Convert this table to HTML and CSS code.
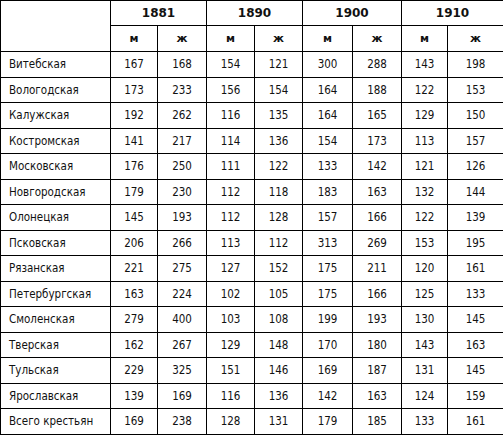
FILE: index.html
```html
<!DOCTYPE html>
<html lang="ru">
<head>
<meta charset="utf-8">
<title>Таблица</title>
<link rel="stylesheet" href="styles.css">
</head>
<body>
<table class="data">
  <colgroup>
    <col class="c-name">
    <col class="c1"><col class="c2">
    <col class="c3"><col class="c4">
    <col class="c5"><col class="c6">
    <col class="c7"><col class="c8">
  </colgroup>
  <thead>
    <tr class="h1">
      <th rowspan="2" class="blank"></th>
      <th colspan="2" class="year">1881</th>
      <th colspan="2" class="year">1890</th>
      <th colspan="2" class="year">1900</th>
      <th colspan="2" class="year">1910</th>
    </tr>
    <tr class="h2">
      <th class="sex">м</th><th class="sex">ж</th>
      <th class="sex">м</th><th class="sex">ж</th>
      <th class="sex">м</th><th class="sex">ж</th>
      <th class="sex">м</th><th class="sex">ж</th>
    </tr>
  </thead>
  <tbody>
    <tr><td class="name">Витебская</td><td>167</td><td>168</td><td>154</td><td>121</td><td>300</td><td>288</td><td>143</td><td>198</td></tr>
    <tr><td class="name">Вологодская</td><td>173</td><td>233</td><td>156</td><td>154</td><td>164</td><td>188</td><td>122</td><td>153</td></tr>
    <tr><td class="name">Калужская</td><td>192</td><td>262</td><td>116</td><td>135</td><td>164</td><td>165</td><td>129</td><td>150</td></tr>
    <tr><td class="name">Костромская</td><td>141</td><td>217</td><td>114</td><td>136</td><td>154</td><td>173</td><td>113</td><td>157</td></tr>
    <tr><td class="name">Московская</td><td>176</td><td>250</td><td>111</td><td>122</td><td>133</td><td>142</td><td>121</td><td>126</td></tr>
    <tr><td class="name">Новгородская</td><td>179</td><td>230</td><td>112</td><td>118</td><td>183</td><td>163</td><td>132</td><td>144</td></tr>
    <tr><td class="name">Олонецкая</td><td>145</td><td>193</td><td>112</td><td>128</td><td>157</td><td>166</td><td>122</td><td>139</td></tr>
    <tr><td class="name">Псковская</td><td>206</td><td>266</td><td>113</td><td>112</td><td>313</td><td>269</td><td>153</td><td>195</td></tr>
    <tr><td class="name">Рязанская</td><td>221</td><td>275</td><td>127</td><td>152</td><td>175</td><td>211</td><td>120</td><td>161</td></tr>
    <tr><td class="name">Петербургская</td><td>163</td><td>224</td><td>102</td><td>105</td><td>175</td><td>166</td><td>125</td><td>133</td></tr>
    <tr><td class="name">Смоленская</td><td>279</td><td>400</td><td>103</td><td>108</td><td>199</td><td>193</td><td>130</td><td>145</td></tr>
    <tr><td class="name">Тверская</td><td>162</td><td>267</td><td>129</td><td>148</td><td>170</td><td>180</td><td>143</td><td>163</td></tr>
    <tr><td class="name">Тульская</td><td>229</td><td>325</td><td>151</td><td>146</td><td>169</td><td>187</td><td>131</td><td>145</td></tr>
    <tr><td class="name">Ярославская</td><td>139</td><td>169</td><td>116</td><td>136</td><td>142</td><td>163</td><td>124</td><td>159</td></tr>
    <tr><td class="name">Всего крестьян</td><td>169</td><td>238</td><td>128</td><td>131</td><td>179</td><td>185</td><td>133</td><td>161</td></tr>
  </tbody>
</table>
</body>
</html>
```

FILE: styles.css
```css
html, body {
  margin: 0;
  padding: 0;
  background: #ffffff;
}

.data {
  border-collapse: collapse;
  table-layout: fixed;
  width: 503px;
  font-family: "DejaVu Sans Condensed", "DejaVu Sans", sans-serif;
  font-size: 11.5px;
  color: #111;
}

.c-name { width: 110px; }
.c1 { width: 47px; }
.c2 { width: 49px; }
.c3 { width: 48px; }
.c4 { width: 48px; }
.c5 { width: 50px; }
.c6 { width: 49px; }
.c7 { width: 46px; }
.c8 { width: 56px; }

.data th,
.data td {
  border: 1px solid #000;
  padding: 0;
  text-align: center;
  vertical-align: middle;
}

.h1 th { height: 24px; }
.h2 th { height: 25px; }

.data tbody td { height: 24.5px; }

.year {
  font-family: "DejaVu Sans", sans-serif;
  font-weight: bold;
  font-size: 12px;
}

.sex {
  font-family: "DejaVu Sans", sans-serif;
  font-weight: bold;
  font-size: 11px;
}

.data td.name {
  text-align: left;
  padding-left: 8px;
}
```
